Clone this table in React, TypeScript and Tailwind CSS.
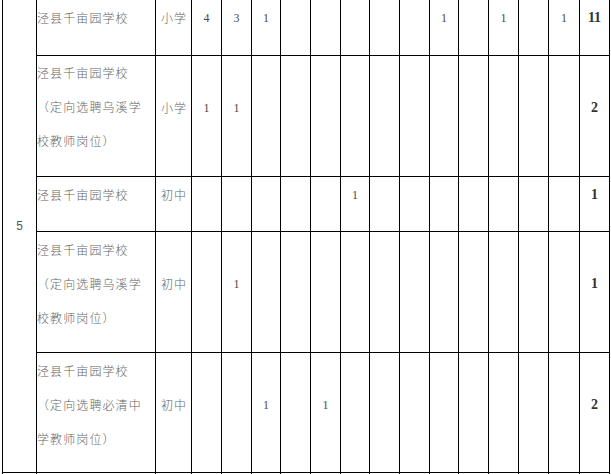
import React from "react";

type Row = { lines: string[]; level: string; data: Record<number, string>; total: string };

const rows: Row[] = [
  { lines: ["泾县千亩园学校"], level: "小学", data: { 0: "4", 1: "3", 2: "1", 8: "1", 10: "1", 12: "1" }, total: "11" },
  { lines: ["泾县千亩园学校", "（定向选聘乌溪学", "校教师岗位）"], level: "小学", data: { 0: "1", 1: "1" }, total: "2" },
  { lines: ["泾县千亩园学校"], level: "初中", data: { 5: "1" }, total: "1" },
  { lines: ["泾县千亩园学校", "（定向选聘乌溪学", "校教师岗位）"], level: "初中", data: { 1: "1" }, total: "1" },
  { lines: ["泾县千亩园学校", "（定向选聘必清中", "学教师岗位）"], level: "初中", data: { 2: "1", 4: "1" }, total: "2" },
];

const cjk = { fontFamily: '"SimSun", "Noto Sans CJK SC", sans-serif' };
const serif = { fontFamily: '"Liberation Serif", "Times New Roman", serif' };

export default function App() {
  return (
    <div className="w-[611px] h-[474px] overflow-hidden bg-white">
      <div className="-mt-px ml-[2px] w-[608px] grid grid-cols-[33px_118px_35px_29px_29px_28px_29px_29px_28px_29px_29px_28px_29px_29px_29px_30px_29px] grid-rows-[55px_120px_54px_120px_119px_40px] gap-px p-px bg-black">
        <div
          className="row-span-5 bg-white flex justify-center pt-[218px] text-[12px] leading-[16px] text-[#555]"
          style={{ fontFamily: '"Liberation Sans", Arial, sans-serif' }}
        >
          5
        </div>
        {rows.map((r, ri) => {
          const multi = r.lines.length > 1;
          const pad = multi ? "pt-[35px]" : "pt-px";
          return (
            <React.Fragment key={ri}>
              <div
                className={`bg-white text-[12px] font-light tracking-[1.1px] text-[#666] ${ri === 1 ? "pt-0" : "pt-px"}`}
                style={cjk}
              >
                {r.lines.map((l, li) => (
                  <div key={li} className="leading-[34px] whitespace-nowrap">
                    {l}
                  </div>
                ))}
              </div>
              <div
                className={`bg-white text-center text-[12px] font-light tracking-[1px] leading-[34px] text-[#666] ${pad}`}
                style={cjk}
              >
                <span className="pl-px">{r.level}</span>
              </div>
              {Array.from({ length: 13 }).map((_, ci) => (
                <div
                  key={ci}
                  className={`bg-white text-center text-[12px] leading-[34px] text-[#4a4a4a] ${pad}`}
                  style={serif}
                >
                  {r.data[ci] ?? ""}
                </div>
              ))}
              <div
                className={`bg-white text-center text-[14px] font-bold leading-[34px] text-[#333] ${pad}`}
                style={serif}
              >
                {r.total}
              </div>
            </React.Fragment>
          );
        })}
        {Array.from({ length: 17 }).map((_, i) => (
          <div key={`e${i}`} className="bg-white" />
        ))}
      </div>
    </div>
  );
}
